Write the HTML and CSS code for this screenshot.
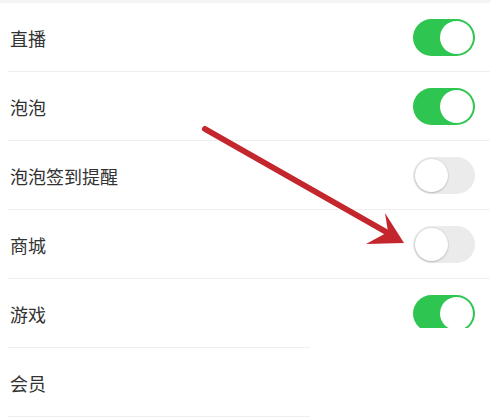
FILE: index.html
```html
<!DOCTYPE html>
<html lang="zh-CN">
<head>
<meta charset="utf-8">
<meta name="viewport" content="width=device-width, initial-scale=1.0">
<link rel="stylesheet" href="styles.css">
<title>设置</title>
</head>
<body>

<div class="topbar"></div>

<div class="settings">
  <div class="row">
    <span class="label">直播</span>
    <span class="switch on"><span class="knob"></span></span>
  </div>
  <div class="row">
    <span class="label">泡泡</span>
    <span class="switch on"><span class="knob"></span></span>
  </div>
  <div class="row">
    <span class="label">泡泡签到提醒</span>
    <span class="switch"><span class="knob"></span></span>
  </div>
  <div class="row">
    <span class="label">商城</span>
    <span class="switch"><span class="knob"></span></span>
  </div>
  <div class="row short">
    <span class="label">游戏</span>
    <span class="clip"><span class="switch on"><span class="knob"></span></span></span>
  </div>
  <div class="row short">
    <span class="label">会员</span>
  </div>

  <!-- annotation arrow drawn over the list -->
  <svg class="arrow" width="490" height="419" viewBox="0 0 490 419">
    <line x1="205" y1="129" x2="388" y2="233" stroke="#c4262d" stroke-width="6" stroke-linecap="round"/>
    <polygon points="404,243 385,213 388,232 366,244" fill="#c4262d"/>
  </svg>
</div>

</body>
</html>
```

FILE: styles.css
```css
html, body {
  margin: 0;
  background: #ffffff;
  font-family: 'Noto Sans CJK SC', 'Noto Sans', sans-serif;
}

.topbar {
  height: 3px;
  background: #f4f4f4;
}

.settings {
  position: relative;
}

.row {
  height: 69px;
  display: flex;
  align-items: center;
  justify-content: space-between;
  padding: 0 15px 0 10px;
  background: linear-gradient(#efefef, #efefef) no-repeat left 8px bottom / calc(100% - 8px) 1px;
}

.row.short {
  background-size: 302px 1px;
}

.label {
  font-size: 18px;
  color: #333333;
  line-height: 1;
}

.switch {
  width: 62px;
  height: 37px;
  box-sizing: border-box;
  border-radius: 19px;
  background: #ebebeb;
  display: flex;
  align-items: center;
  padding: 2px;
}

.switch .knob {
  width: 33px;
  height: 33px;
  border-radius: 50%;
  background: #ffffff;
  box-shadow: 0 1px 2px rgba(0, 0, 0, 0.18), 0 0 0 1px #e2e2e2;
}

.switch.on {
  background: #2fc551;
  justify-content: flex-end;
}

.switch.on .knob {
  box-shadow: none;
}

.clip {
  height: 33px;
  align-self: flex-start;
  margin-top: 16px;
  overflow: hidden;
}

.arrow {
  position: absolute;
  left: 0;
  top: -3px;
  pointer-events: none;
}
```
